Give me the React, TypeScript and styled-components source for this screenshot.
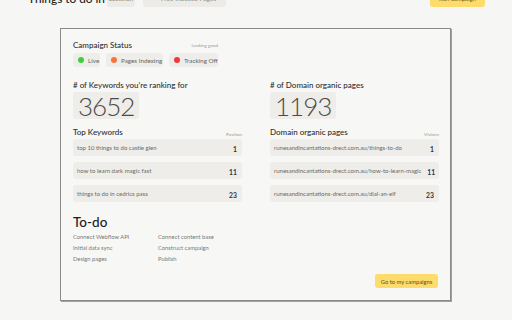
import styled, { createGlobalStyle } from 'styled-components';

// === STYLES ===

const GlobalStyle = createGlobalStyle`
  html, body {
    margin: 0;
    padding: 0;
    background: #f6f6f4;
    font-family: Lato, 'Liberation Sans', sans-serif;
    color: #2b2b2b;
    overflow: hidden;
  }
`;

const Page = styled.div`
  width: 512px;
  height: 320px;
  overflow: hidden;
`;

const TopBar = styled.div`
  display: flex;
  align-items: center;
  height: 20px;
  margin-top: -12px;
  padding: 0 27px 0 28px;
  gap: 8px;
`;

const PageTitle = styled.h1`
  margin: 0 -4px 0 0;
  width: 75px;
  white-space: nowrap;
  font-size: 11.8px;
  font-weight: 500;
  color: #1c1c1c;
`;

const TopBadge = styled.span<{ $width: number }>`
  display: inline-flex;
  align-items: center;
  justify-content: center;
  gap: 4px;
  box-sizing: border-box;
  width: ${p => p.$width}px;
  height: 18px;
  border-radius: 3px;
  background: #ecebe7;
  font-size: 6.5px;
  color: #8a8a86;
`;

const RunButton = styled.button`
  margin-left: auto;
  height: 18px;
  width: 55px;
  padding: 0;
  border: none;
  border-radius: 3px;
  background: #fddc6c;
  font-family: inherit;
  font-size: 6px;
  color: #6b5a2a;
`;

const Card = styled.div`
  box-sizing: border-box;
  margin: 20px 0 0 60px;
  width: 391px;
  height: 273px;
  border: 1px solid #8a8a8a;
  box-shadow: 1px 1px 0 #a0a0a0;
  background: #f7f7f5;
  padding: 11px 12px 12px 12px;
  display: flex;
  flex-direction: column;
`;

const StatusBlock = styled.div`
  display: inline-flex;
  flex-direction: column;
  align-self: flex-start;
`;

const StatusHead = styled.div`
  display: flex;
  align-items: center;
  justify-content: space-between;
  height: 10px;
`;

const SectionTitle = styled.h3`
  margin: 0;
  font-size: 8px;
  line-height: 10px;
  font-weight: 500;
  color: #2e2e2e;
`;

const TinyLabel = styled.span`
  font-size: 4.5px;
  color: #9a9a96;
`;

const PillRow = styled.div`
  display: flex;
  gap: 6px;
  margin-top: 3px;
`;

const Pill = styled.span<{ $width: number }>`
  display: inline-flex;
  align-items: center;
  gap: 4px;
  box-sizing: border-box;
  width: ${p => p.$width}px;
  height: 14px;
  padding: 0 0 0 5px;
  border-radius: 3px;
  background: #eeede9;
  font-size: 6.3px;
  color: #666;
  white-space: nowrap;
  overflow: hidden;
`;

const Dot = styled.span<{ $color: string; $size?: number }>`
  flex: none;
  width: ${p => p.$size ?? 6}px;
  height: ${p => p.$size ?? 6}px;
  border-radius: 50%;
  background: ${p => p.$color};
`;

const Metrics = styled.div`
  display: grid;
  grid-template-columns: 169px 169px;
  column-gap: 28px;
  margin-top: 13px;
`;

const Column = styled.div`
  display: flex;
  flex-direction: column;
`;

const MetricBox = styled.div`
  align-self: flex-start;
  display: flex;
  align-items: center;
  height: 27px;
  margin-top: 2px;
  padding: 0 5px 0 5px;
  border-radius: 3px;
  background: #eeede9;
  font-size: 26px;
  font-weight: 300;
  letter-spacing: -1px;
  color: #4a4a4a;
`;

const ListHead = styled.div`
  display: flex;
  align-items: flex-end;
  justify-content: space-between;
  margin-top: 8px;
  height: 10px;
`;

const Rows = styled.div`
  display: flex;
  flex-direction: column;
  gap: 6px;
  margin-top: 2px;
`;

const Row = styled.div`
  display: flex;
  align-items: center;
  justify-content: space-between;
  gap: 6px;
  height: 17px;
  padding: 0 5px 0 4px;
  border-radius: 3px;
  background: #eeede9;
`;

const RowText = styled.span`
  font-size: 6px;
  color: #6a6a66;
  white-space: nowrap;
`;

const RowNum = styled.span`
  padding-top: 2px;
  font-size: 6.8px;
  font-weight: 700;
  color: #333;
`;

const TodoTitle = styled.h2`
  margin: 12px 0 0;
  font-size: 13.5px;
  line-height: 16px;
  font-weight: 500;
  color: #1c1c1c;
`;

const TodoGrid = styled.div`
  display: grid;
  grid-template-columns: 85px auto;
  margin-top: 1px;
`;

const TodoItem = styled.span`
  font-size: 5.8px;
  line-height: 11px;
  color: #7a7a76;
`;

const Footer = styled.div`
  display: flex;
  justify-content: flex-end;
  margin-top: auto;
`;

const CampaignsButton = styled.button`
  height: 14px;
  width: 63px;
  padding: 0;
  border: none;
  border-radius: 3px;
  background: #fddc6c;
  font-family: inherit;
  font-size: 5.8px;
  color: #5e4d1f;
`;

// === DATA ===

const statuses = [
  { label: 'Live', color: '#3fcf3a', width: 27 },
  { label: 'Pages Indexing', color: '#f4763e', width: 57 },
  { label: 'Tracking Off', color: '#f0383a', width: 49 },
];

const keywords = [
  { text: 'top 10 things to do castle glen', num: 1 },
  { text: 'how to learn dark magic fast', num: 11 },
  { text: 'things to do in cedrics pass', num: 23 },
];

const pages = [
  { text: 'runesandincantations-drect.com.au/things-to-do', num: 1 },
  { text: 'runesandincantations-drect.com.au/how-to-learn-magic', num: 11 },
  { text: 'runesandincantations-drect.com.au/dial-an-elf', num: 23 },
];

const todos = [
  'Connect Webflow API',
  'Connect content base',
  'Initial data sync',
  'Construct campaign',
  'Design pages',
  'Publish',
];

// === COMPONENT ===

export default function App() {
  return (
    <Page>
      <GlobalStyle />
      <TopBar>
        <PageTitle>Things to do in</PageTitle>
        <TopBadge $width={28}>Location</TopBadge>
        <TopBadge $width={83}>
          <Dot $color="#3fcf3a" $size={4} />
          Free Indexed Pages
        </TopBadge>
        <RunButton>Run campaign</RunButton>
      </TopBar>

      <Card>
        <StatusBlock>
          <StatusHead>
            <SectionTitle>Campaign Status</SectionTitle>
            <TinyLabel>Looking good</TinyLabel>
          </StatusHead>
          <PillRow>
            {statuses.map(s => (
              <Pill key={s.label} $width={s.width}>
                <Dot $color={s.color} />
                {s.label}
              </Pill>
            ))}
          </PillRow>
        </StatusBlock>

        <Metrics>
          <Column>
            <SectionTitle>{'# of Keywords you\u2019re ranking for'}</SectionTitle>
            <MetricBox>3652</MetricBox>
            <ListHead>
              <SectionTitle>Top Keywords</SectionTitle>
              <TinyLabel>Position</TinyLabel>
            </ListHead>
            <Rows>
              {keywords.map(k => (
                <Row key={k.text}>
                  <RowText>{k.text}</RowText>
                  <RowNum>{k.num}</RowNum>
                </Row>
              ))}
            </Rows>
          </Column>
          <Column>
            <SectionTitle># of Domain organic pages</SectionTitle>
            <MetricBox>1193</MetricBox>
            <ListHead>
              <SectionTitle>Domain organic pages</SectionTitle>
              <TinyLabel>Visitors</TinyLabel>
            </ListHead>
            <Rows>
              {pages.map(p => (
                <Row key={p.text}>
                  <RowText>{p.text}</RowText>
                  <RowNum>{p.num}</RowNum>
                </Row>
              ))}
            </Rows>
          </Column>
        </Metrics>

        <TodoTitle>To-do</TodoTitle>
        <TodoGrid>
          {todos.map(t => (
            <TodoItem key={t}>{t}</TodoItem>
          ))}
        </TodoGrid>

        <Footer>
          <CampaignsButton>Go to my campaigns</CampaignsButton>
        </Footer>
      </Card>
    </Page>
  );
}
